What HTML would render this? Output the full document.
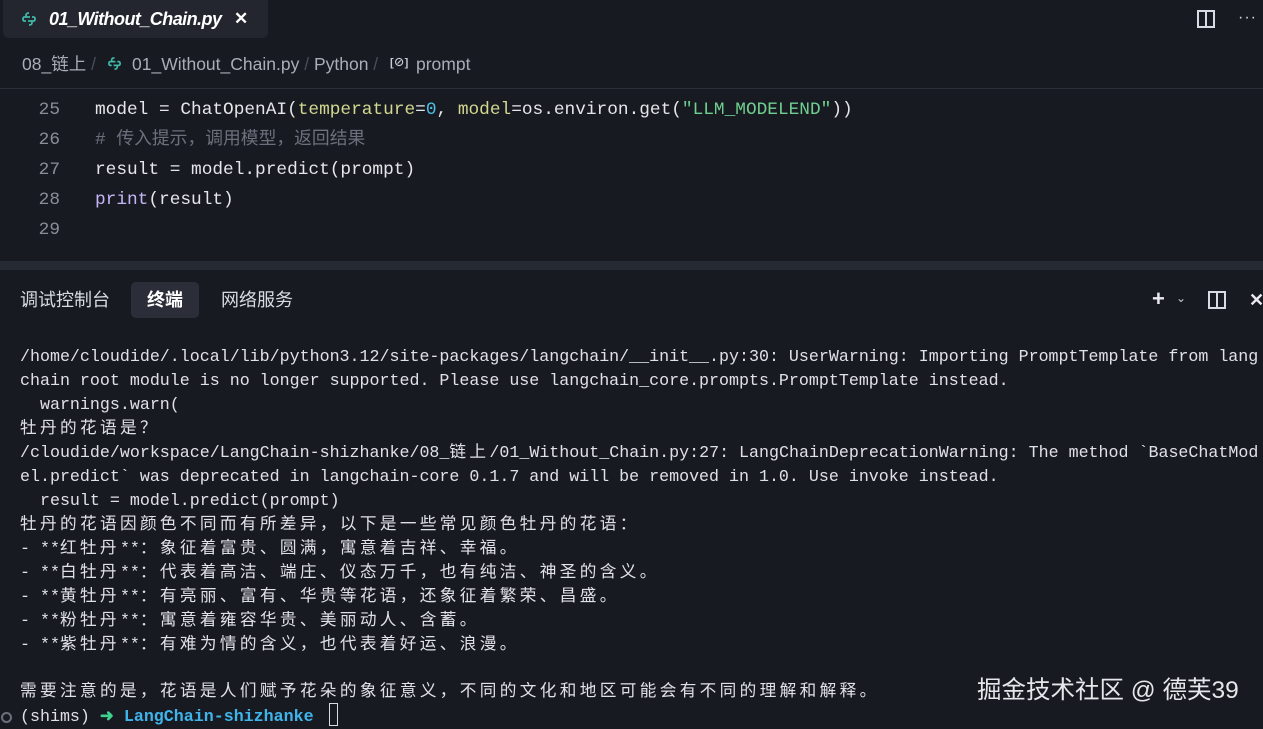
<!DOCTYPE html>
<html><head><meta charset="utf-8"><style>
body{margin:0;width:1263px;height:726px;background:#181a22;overflow:hidden;position:relative;font-family:"Liberation Sans","Noto Sans CJK SC",sans-serif;color:#d4d6dc}
.a{position:absolute;white-space:pre}
.code{font-family:"Liberation Mono","Noto Sans CJK SC",monospace;font-size:17.8px;line-height:30px;height:30px;color:#e4e6ea}
.ln{color:#8a8e98;width:60px;text-align:right;left:0}
.term{font-family:"Liberation Mono","Noto Sans CJK SC",monospace;font-size:16.65px;line-height:24px;height:24px;color:#dfe1e6;left:20px}
.c{letter-spacing:3.35px}
.bc{font-size:17.5px;line-height:24px;top:52px;color:#a9adb7}
</style></head><body>
<div class="a" style="left:3px;top:0;width:265px;height:38px;background:#23262f;border-radius:0 0 6px 6px"></div>
<svg class="a" style="left:21px;top:11px" width="16" height="16" viewBox="0 0 16 16"><path d="M8 2C5 2 5 3.5 5 4.5V6h4M8 14c3 0 3-1.5 3-2.5V10H7M5 6H3.5C2 6 2 8 2 8s0 2 1.5 2H5M11 10h1.5C14 10 14 8 14 8s0-2-1.5-2H11" fill="none" stroke="#3fb8a8" stroke-width="1.8"/></svg>
<div class="a" style="left:49px;top:7px;font-size:18px;line-height:24px;font-style:italic;font-weight:bold;color:#fff;letter-spacing:-0.55px">01_Without_Chain.py</div>
<div class="a" style="left:234px;top:7px;font-size:17px;line-height:24px;font-weight:bold;color:#fff">✕</div>
<div class="a" style="left:1197px;top:10px;width:18px;height:18px;border:2px solid #d8dbe4;box-sizing:border-box"></div>
<div class="a" style="left:1205px;top:10px;width:2px;height:18px;background:#d8dbe4"></div>
<div class="a" style="left:1238px;top:8px;font-size:16px;line-height:20px;color:#d8dbe4;letter-spacing:1px">···</div>

<div class="a bc" style="left:22px">08_链上 <span style="color:#4a4e58">/</span></div>
<svg class="a" style="left:107px;top:56px" width="15" height="15" viewBox="0 0 16 16"><path d="M8 2C5 2 5 3.5 5 4.5V6h4M8 14c3 0 3-1.5 3-2.5V10H7M5 6H3.5C2 6 2 8 2 8s0 2 1.5 2H5M11 10h1.5C14 10 14 8 14 8s0-2-1.5-2H11" fill="none" stroke="#3fb8a8" stroke-width="1.8"/></svg>
<div class="a bc" style="left:132px">01_Without_Chain.py <span style="color:#4a4e58">/</span> Python <span style="color:#4a4e58">/</span></div>
<div class="a" style="left:390px;top:56px;font-size:11px;line-height:14px;font-weight:bold;color:#c9ccd4">[⊘]</div>
<div class="a bc" style="left:416px">prompt</div>
<div class="a" style="left:0;top:88px;width:1263px;height:1px;background:#2c2f38"></div>

<div class="a code ln" style="top:95px">25</div>
<div class="a code ln" style="top:125px">26</div>
<div class="a code ln" style="top:155px">27</div>
<div class="a code ln" style="top:185px">28</div>
<div class="a code ln" style="top:215px">29</div>
<div class="a code" style="left:95px;top:95px">model = ChatOpenAI(<span style="color:#d2d88e">temperature</span>=<span style="color:#4fc1e9">0</span>, <span style="color:#d2d88e">model</span>=os.environ.get(<span style="color:#6fcf8f">"LLM_MODELEND"</span>))</div>
<div class="a code" style="left:95px;top:125px;color:#6b707c"># 传入提示，调用模型，返回结果</div>
<div class="a code" style="left:95px;top:155px">result = model.predict(prompt)</div>
<div class="a code" style="left:95px;top:185px"><span style="color:#c4b5f7">print</span>(result)</div>

<div class="a" style="left:0;top:261px;width:1263px;height:9px;background:#262a33"></div>
<div class="a" style="left:20px;top:288px;font-size:18px;line-height:24px;color:#d8dbe2">调试控制台</div>
<div class="a" style="left:131px;top:282px;width:68px;height:36px;background:#2b2e38;border-radius:5px"></div>
<div class="a" style="left:147px;top:288px;font-size:18px;line-height:24px;font-weight:bold;color:#fff">终端</div>
<div class="a" style="left:221px;top:288px;font-size:18px;line-height:24px;color:#d8dbe2">网络服务</div>
<div class="a" style="left:1152px;top:286px;font-size:22px;line-height:26px;font-weight:bold;color:#e8eaf0">+</div>
<div class="a" style="left:1176px;top:290px;font-size:12px;line-height:16px;color:#c8ccd4">⌄</div>
<div class="a" style="left:1208px;top:291px;width:18px;height:18px;border:2px solid #d8dbe4;box-sizing:border-box"></div>
<div class="a" style="left:1216px;top:291px;width:2px;height:18px;background:#d8dbe4"></div>
<div class="a" style="left:1249px;top:288px;font-size:18px;line-height:24px;font-weight:bold;color:#e8eaf0">✕</div>

<div class="a term" style="top:345px">/home/cloudide/.local/lib/python3.12/site-packages/langchain/__init__.py:30: UserWarning: Importing PromptTemplate from lang</div>
<div class="a term" style="top:369px">chain root module is no longer supported. Please use langchain_core.prompts.PromptTemplate instead.</div>
<div class="a term" style="top:393px">  warnings.warn(</div>
<div class="a term" style="top:417px"><span class="c">牡丹的花语是？</span></div>
<div class="a term" style="top:441px">/cloudide/workspace/LangChain-shizhanke/08_<span class="c">链上</span>/01_Without_Chain.py:27: LangChainDeprecationWarning: The method `BaseChatMod</div>
<div class="a term" style="top:465px">el.predict` was deprecated in langchain-core 0.1.7 and will be removed in 1.0. Use invoke instead.</div>
<div class="a term" style="top:489px">  result = model.predict(prompt)</div>
<div class="a term" style="top:513px"><span class="c">牡丹的花语因颜色不同而有所差异，以下是一些常见颜色牡丹的花语：</span></div>
<div class="a term" style="top:537px">- **<span class="c">红牡丹</span>**<span class="c">：象征着富贵、圆满，寓意着吉祥、幸福。</span></div>
<div class="a term" style="top:561px">- **<span class="c">白牡丹</span>**<span class="c">：代表着高洁、端庄、仪态万千，也有纯洁、神圣的含义。</span></div>
<div class="a term" style="top:585px">- **<span class="c">黄牡丹</span>**<span class="c">：有亮丽、富有、华贵等花语，还象征着繁荣、昌盛。</span></div>
<div class="a term" style="top:609px">- **<span class="c">粉牡丹</span>**<span class="c">：寓意着雍容华贵、美丽动人、含蓄。</span></div>
<div class="a term" style="top:633px">- **<span class="c">紫牡丹</span>**<span class="c">：有难为情的含义，也代表着好运、浪漫。</span></div>
<div class="a term" style="top:680px"><span class="c">需要注意的是，花语是人们赋予花朵的象征意义，不同的文化和地区可能会有不同的理解和解释。</span></div>
<div class="a" style="left:1px;top:712px;width:7px;height:7px;border:2px solid #6b707c;border-radius:50%"></div>
<div class="a term" style="top:705px">(shims) <span style="color:#3fd28f;font-weight:bold">➜</span> <span style="color:#3fb4ea;font-weight:bold">LangChain-shizhanke</span> </div>
<div class="a" style="left:329px;top:703px;width:9px;height:23px;border:1px solid #d8dbe4;box-sizing:border-box"></div>
<div class="a" style="left:977px;top:676px;font-size:24.5px;line-height:30px;color:#e6e7ea">掘金技术社区 @ 德芙39</div>
</body></html>
